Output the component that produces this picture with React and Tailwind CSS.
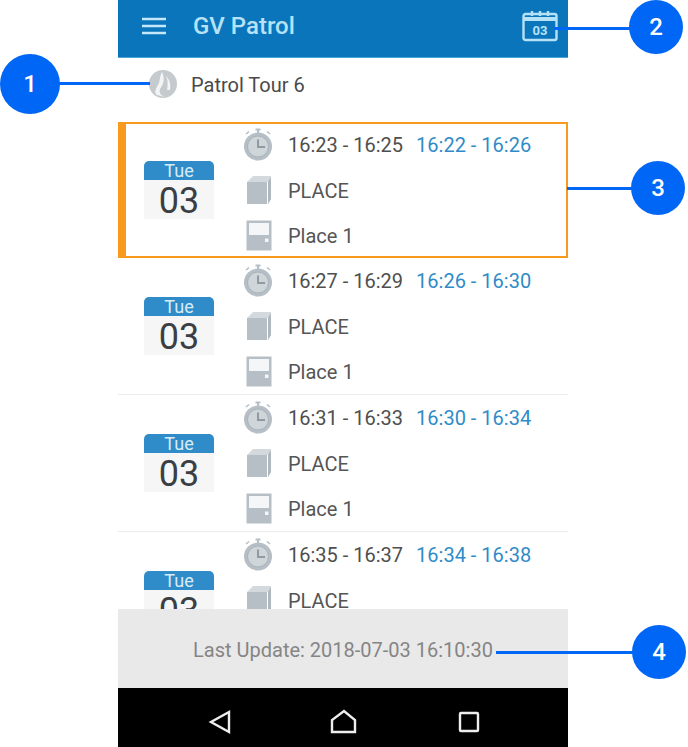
import React from "react";

const Clock = () => (
  <svg width="30" height="34" viewBox="0 0 30 34" fill="none">
    <rect x="12.5" y="0.5" width="5" height="2" fill="#b5bfc5" />
    <rect x="14" y="2" width="2" height="3" fill="#b5bfc5" />
    <path d="M3 6 L6 3.5 M27 6 L24 3.5" stroke="#b5bfc5" strokeWidth="1.6" />
    <circle cx="15" cy="18.5" r="14" fill="#b5bfc5" />
    <circle cx="15" cy="18.5" r="10.5" fill="#cfd6da" stroke="#a9b3b9" strokeWidth="1" />
    <path d="M15 11.5 V19 H22" stroke="#8f9aa1" strokeWidth="2" />
  </svg>
);
const Box = () => (
  <svg width="26" height="30" viewBox="0 0 26 30">
    <path d="M1 7 L7 1 H25 V24 L22 29 V7 Z" fill="#d3d9dd" />
    <path d="M1 7 H21 V29 H1 Z" fill="#b5bfc5" />
    <path d="M22 7 L25 2 V24 L22 29 Z" fill="#aeb8be" />
  </svg>
);
const Door = () => (
  <svg width="26" height="31" viewBox="0 0 26 31">
    <rect x="0.5" y="0.5" width="25" height="30" fill="#b5bfc5" />
    <rect x="3" y="3" width="20" height="12" fill="#f4f6f7" />
    <rect x="19" y="18.5" width="3.5" height="3.5" fill="#f4f6f7" />
  </svg>
);
const Sail = () => (
  <svg width="28" height="28" viewBox="0 0 28 28" className="shrink-0">
    <circle cx="14" cy="14" r="14" fill="#c4cacd" />
    <path d="M13 2 C16 8 15 14 11 19 C10 22 11 25 16 27 L8 25 C4 22 8 17 10 13 C11 9 11 5 13 2 Z" fill="#f2f4f5" />
    <path d="M17 6 C21 10 22 15 21 20 L18 20 C19 15 19 10 17 6 Z" fill="#f2f4f5" />
  </svg>
);

const DateBadge = () => (
  <div className="mb-[1px] w-[70px] shrink-0">
    <div className="h-[19px] rounded-t-[5px] bg-[#2f8cc8] text-center text-[18px] leading-[19px] text-[#d8ecf7]">Tue</div>
    <div className="h-[39px] bg-[#f6f6f6] text-center text-[36px] leading-[42px] text-[#3a3f44]">03</div>
  </div>
);

const Row = ({ sched, actual, selected }) => (
  <div
    className={
      selected
        ? "flex h-[136px] shrink-0 items-center border-y-[2px] border-r-[2px] border-l-[8px] border-[#f79a1e] pl-[18px]"
        : "flex h-[137px] shrink-0 items-center border-b border-[#ececec] pl-[26px]"
    }
  >
    <DateBadge />
    <div className="ml-[30px] flex flex-col gap-[12px]">
      <div className="flex h-[33px] items-center">
        <div className="flex w-[44px] -translate-x-px justify-start"><Clock /></div>
        <span className="text-[20px] text-[#4f4f4f]">{sched}</span>
        <span className="ml-[13px] text-[20px] text-[#2f8cc8]">{actual}</span>
      </div>
      <div className="flex h-[33px] items-center">
        <div className="flex w-[44px] pl-[2px]"><Box /></div>
        <span className="pt-[2px] text-[20px] text-[#555555]">PLACE</span>
      </div>
      <div className="flex h-[33px] items-center">
        <div className="flex w-[44px] pl-[2px]"><Door /></div>
        <span className="pt-[2px] text-[20px] text-[#555555]">Place 1</span>
      </div>
    </div>
  </div>
);

const Callout = ({ n, className, line }) => (
  <>
    <div className={line} />
    <div className={"absolute flex items-center justify-center rounded-full bg-[#0066f5] text-[24px] font-medium text-white " + className}>{n}</div>
  </>
);

export default function App() {
  return (
    <div className="relative h-[747px] w-[688px] overflow-hidden bg-white font-['Roboto',sans-serif]">
      <div className="ml-[118px] flex h-[747px] w-[450px] flex-col">
        <header className="flex h-[58px] shrink-0 items-center border-b border-[#4aa5d6] bg-[#0a75bb] pb-[6px] pl-[24px] pr-[10px] text-[#b6e2f7]">
          <svg width="24" height="18" viewBox="0 0 24 18">
            <path d="M0 2 H24 M0 9 H24 M0 16 H24" stroke="#c4e8f8" strokeWidth="2.4" />
          </svg>
          <span className="ml-[27px] text-[24px] font-medium">GV Patrol</span>
          <svg width="36" height="32" viewBox="0 0 36 32" className="ml-auto" fill="none">
            <rect x="1.5" y="4" width="33" height="26" rx="2" stroke="#b6e2f7" strokeWidth="2.4" />
            <path d="M1.5 9 H34.5" stroke="#b6e2f7" strokeWidth="4" />
            <path d="M10 1 V6 M18 1 V6 M26 1 V6" stroke="#b6e2f7" strokeWidth="2.4" />
            <text x="18" y="25" textAnchor="middle" fontSize="13" fontWeight="700" fill="#b6e2f7" fontFamily="Roboto, sans-serif">03</text>
          </svg>
        </header>
        <div className="flex h-[64px] shrink-0 items-center pb-[12px] pl-[31px]">
          <Sail />
          <span className="ml-[14px] pt-[2px] text-[20px] text-[#4a4a4a]">Patrol Tour 6</span>
        </div>
        <div className="min-h-0 flex-1 overflow-hidden">
          <Row sched="16:23 - 16:25" actual="16:22 - 16:26" selected />
          <Row sched="16:27 - 16:29" actual="16:26 - 16:30" />
          <Row sched="16:31 - 16:33" actual="16:30 - 16:34" />
          <Row sched="16:35 - 16:37" actual="16:34 - 16:38" />
        </div>
        <div className="flex h-[79px] shrink-0 items-center justify-center bg-[#e9e9e9] pt-[3px] text-[20px] text-[#858585]">
          Last Update: 2018-07-03 16:10:30
        </div>
        <nav className="relative flex h-[59px] shrink-0 items-center bg-black">
          <svg width="450" height="59" viewBox="0 0 450 59" fill="none" stroke="#eeeeee" strokeWidth="2.4">
            <path d="M111 24 L93 34 L111 44 Z" />
            <path d="M214 44 V32 L226 23 L237 32 V44 Z" />
            <rect x="342" y="25" width="18" height="18" rx="1" />
          </svg>
        </nav>
      </div>
      <Callout n="1" className="left-0 top-[54px] h-[60px] w-[60px]" line="absolute left-[58px] top-[82px] h-[3px] w-[92px] bg-[#0066f5]" />
      <Callout n="2" className="left-[629px] top-0 h-[54px] w-[54px]" line="absolute left-[554px] top-[27px] h-[3px] w-[78px] bg-[#0066f5]" />
      <Callout n="3" className="left-[631px] top-[161px] h-[54px] w-[54px]" line="absolute left-[567px] top-[187px] h-[3px] w-[68px] bg-[#0066f5]" />
      <Callout n="4" className="left-[632px] top-[625px] h-[54px] w-[54px]" line="absolute left-[496px] top-[651px] h-[3px] w-[140px] bg-[#0066f5]" />
    </div>
  );
}
